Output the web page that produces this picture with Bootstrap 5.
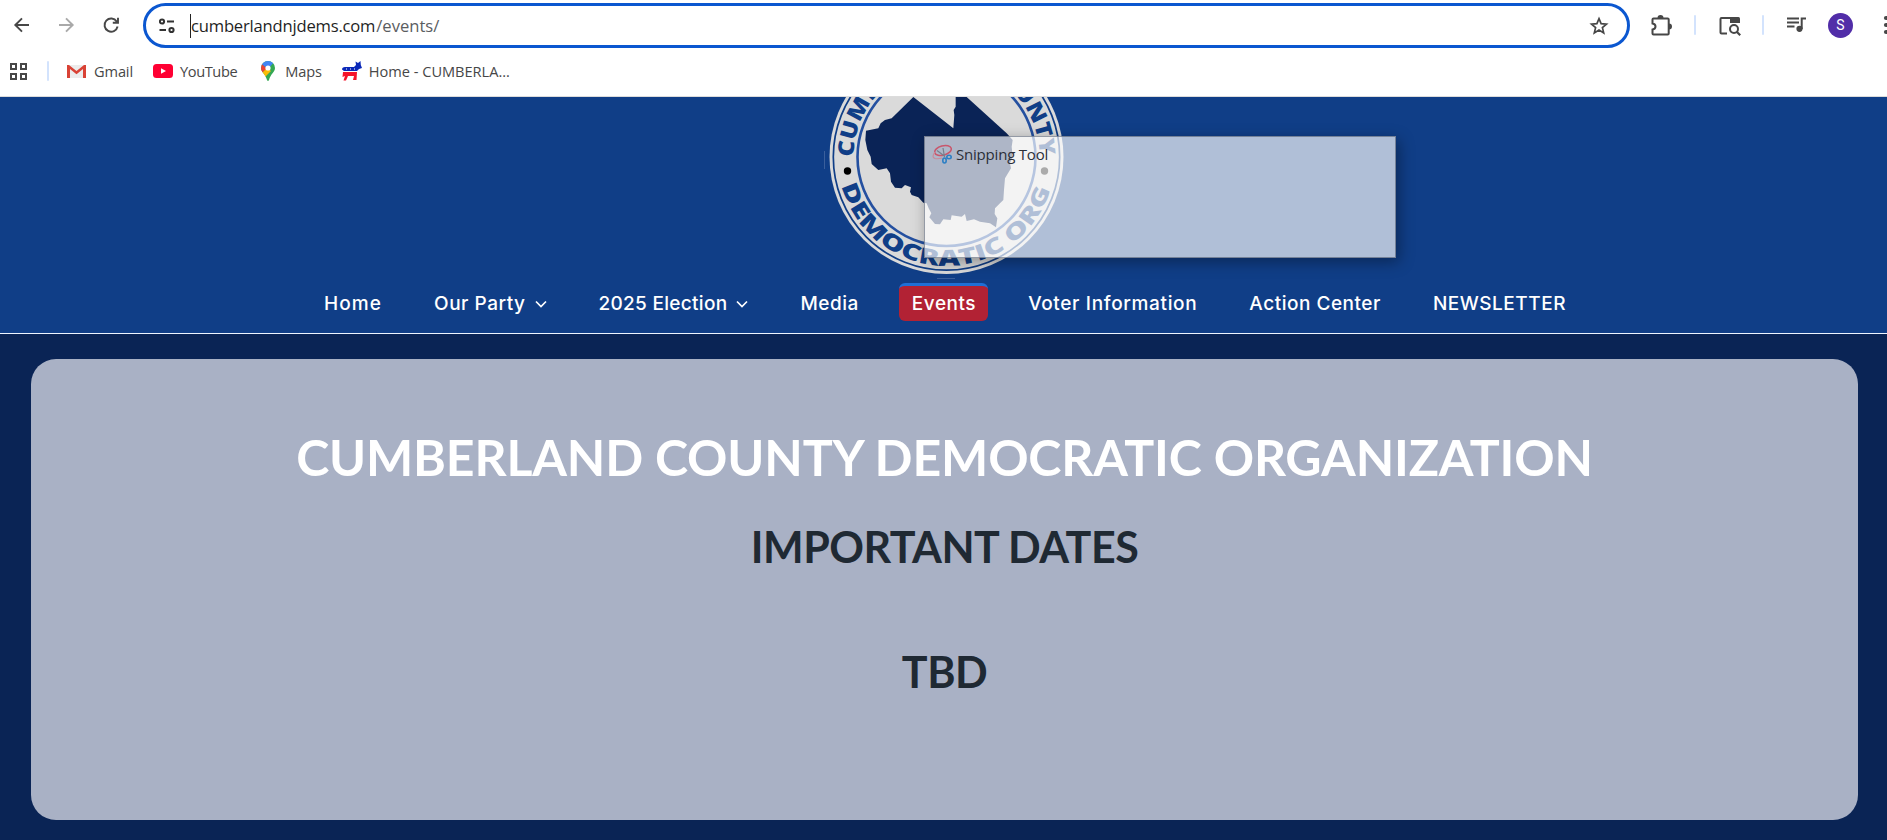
<!DOCTYPE html>
<html lang="en">
<head>
<meta charset="utf-8">
<title>Events - Cumberland County Democratic Organization</title>
<link rel="stylesheet" href="https://cdn.jsdelivr.net/npm/bootstrap@5.3.0/dist/css/bootstrap.min.css">
<style>
body{background:#fff;overflow:hidden;font-family:"Open Sans",sans-serif;height:840px}
svg{display:block;flex:none}
/* browser chrome */
.tool-row{height:50px;padding-left:12px;overflow:hidden}
.omni{flex:none;height:45px;width:1487px;margin:1px 0 0 22px;border:3px solid #0b57d0;border-radius:23px;padding:0 18px 0 9px}
.caret{width:1px;height:24px;background:#222}
.url{font-size:16.6px;letter-spacing:-.2px;color:#1f1f1f;line-height:24px}
.url span{color:#5a5d61;letter-spacing:0;margin-left:1px}
.sep{width:2px;height:20px;background:#d3e3fd;border-radius:1px;flex:none}
.avatar{width:25px;height:25px;background:#512da8;font:400 14px Roboto,sans-serif;flex:none}
.marks-row{height:46px;padding:0 0 4px 9px;font-size:14.6px;letter-spacing:-.12px;color:#474747;line-height:20px}
.marks-row a{color:inherit}
.marks-row span{padding-bottom:1px}
.marks-row .l-tube{letter-spacing:-.4px}
.marks-row .l-home{letter-spacing:-.02px}
.chrome-edge{height:1px;background:#dcdcdc}
.g18{margin-left:18px}.g19{margin-left:19px}.g20{margin-left:20px}.g21{margin-left:21px}.g22{margin-left:22px}.g24{margin-left:24px}.g25{margin-left:25px}.g30{margin-left:30px}
.g4{margin-left:4px}.g7{margin-left:7px}.g9{margin-left:9px}.g10{margin-left:10px}
/* site */
.site-head{height:237px;background:#103e87;border-bottom:1px solid #eef5ff}
.menu{padding-left:324px;gap:52px;font:500 19px/24px Inter,sans-serif}
.menu a{color:#fff;letter-spacing:.52px;padding-top:9px}
.menu .l-first{letter-spacing:1.1px}
.menu .l-elec{letter-spacing:.3px}
.menu .l-voter{letter-spacing:.66px}
.menu .on{background:#b22234;border-top:3px solid #1f6fd6;border-radius:6px;margin:0 -12px;padding:6px 12px 5px 13px}
.site-body{height:506px;background:#0a2455;padding:25px 29px 0 31px}
.panel{height:461px;background:#a9b1c5;border-radius:25px;padding-top:68px;font-family:Lato,sans-serif;font-weight:700;color:#1f2933}
.panel h1{font-size:50px;line-height:60px;font-weight:700;letter-spacing:-.17px;color:#fff;margin:0 0 34px}
.panel h2{font-size:43px;line-height:52px;font-weight:700;letter-spacing:-.5px;margin:0 0 73px}
.snip{left:924px;top:136px;width:472px;height:122px;background:rgba(255,255,255,.67);border:1px solid rgba(70,80,100,.55);box-shadow:3px 4px 14px rgba(0,0,0,.36);padding:6px 0 0 7px;font-size:15px;letter-spacing:-.2px;line-height:22px;color:#2b2f38}
</style>
</head>
<body>
<header>
  <div class="tool-row d-flex align-items-center">
    <svg width="20" height="20" viewBox="0 0 20 20" fill="none" stroke="#474747" stroke-width="1.9"><path d="M17 10H4M10 3.3 3.3 10 10 16.7"/></svg>
    <svg class="g24" width="20" height="20" viewBox="0 0 20 20" fill="none" stroke="#a9a9a9" stroke-width="1.9"><path d="M3 10h13M10 3.3 16.7 10 10 16.7"/></svg>
    <svg class="g25" width="20" height="20" viewBox="0 0 20 20" fill="none" stroke="#474747" stroke-width="1.9"><path d="M15.7 6.500A6.600 6.600 0 1 0 16.600 11.500M17 2.800v5h-5.200"/></svg>
    <div class="omni d-flex align-items-center">
      <svg class="ms-1" width="18" height="18" viewBox="0 0 18 18" fill="none" stroke="#333" stroke-width="2"><circle cx="3" cy="4.500" r="2.100"/><path d="M8 4.500h7M.5 13H7"/><circle cx="12.500" cy="13" r="2.100"/></svg>
      <div class="caret" style="margin-left:13px"></div>
      <div class="url">cumberlandnjdems.com<span>/events/</span></div>
      <svg class="ms-auto" width="20" height="20" viewBox="0 0 20 20" fill="none" stroke="#474747" stroke-width="1.7"><path d="m10 2.600 2.100 5 5.400.5-4.100 3.500 1.300 5.300L10 14.100l-4.700 2.800 1.300-5.300L2.500 8.100l5.400-.5z"/></svg>
    </div>
    <svg class="g19" width="24" height="24" viewBox="0 0 24 24"><path d="M4.500 5.500h14.200q1 0 1 1v14q0 1-1 1H4.500q-1 0-1-1v-4q3-.5 3-3t-3-3v-4q0-1 1-1z" fill="none" stroke="#474747" stroke-width="2"/><path d="M8.500 5a3 3 0 0 1 6 0zM20 10.500a3 3 0 0 1 0 6z" fill="#474747"/></svg>
    <div class="sep g21"></div>
    <svg class="g22" width="24" height="22" viewBox="0 0 24 22"><path d="M12 4H3.500q-1 0-1 1v13.500q0 1 1 1H9" fill="none" stroke="#474747" stroke-width="2"/><path d="M12 3h8.500Q22 3 22 4.500V9H12z" fill="#474747"/><circle cx="16" cy="15" r="4" fill="none" stroke="#474747" stroke-width="2"/><path d="m18.700 17.700 3.500 3.500" stroke="#474747" stroke-width="2.200"/></svg>
    <div class="sep g20"></div>
    <svg class="g22" width="22" height="20" viewBox="0 0 22 20"><path d="M1 3.500h12M1 7.500h12M1 11.500h7.500M15.700 14V3.500H20" fill="none" stroke="#474747" stroke-width="2"/><circle cx="13.500" cy="13.800" r="3.100" fill="#474747"/></svg>
    <div class="avatar g20 rounded-circle text-white d-flex align-items-center justify-content-center">S</div>
    <svg class="g30" width="8" height="20" viewBox="0 0 8 20" fill="#474747"><circle cx="3" cy="3" r="2.100"/><circle cx="3" cy="10" r="2.100"/><circle cx="3" cy="17" r="2.100"/></svg>
  </div>
  <nav class="marks-row d-flex align-items-center">
    <svg width="19" height="19" viewBox="0 0 19 19" fill="none" stroke="#474747" stroke-width="2"><path d="M2 2h5v5H2zM12 2h5v5h-5zM2 12h5v5H2zM12 12h5v5h-5z"/></svg>
    <div class="sep g19"></div>
    <a href="#" class="g18 d-flex align-items-center text-decoration-none">
      <svg width="19" height="14" viewBox="0 0 19 14"><path d="M1 1h17v13H1z" fill="#ececec"/><path d="M0 1h2l7.500 6L17 1h2v13h-3V5l-6.500 5.200L3 5v9H0z" fill="#d94235"/></svg>
      <span class="ms-2">Gmail</span></a>
    <a href="#" class="g20 d-flex align-items-center text-decoration-none">
      <svg width="20" height="14" viewBox="0 0 20 14"><rect width="20" height="14" rx="3.500" fill="#f03"/><path d="m8 4.300 5 2.700-5 2.700z" fill="#fff"/></svg>
      <span class="g7 l-tube">YouTube</span></a>
    <a href="#" class="g24 d-flex align-items-center text-decoration-none">
      <svg width="14" height="20" viewBox="0 0 14 20"><clipPath id="pin"><path d="M7 0a7 7 0 0 1 7 7c0 4-4.500 6-6 12q-1 2-2 0C4.500 13 0 11 0 7a7 7 0 0 1 7-7z"/></clipPath><g clip-path="url(#pin)"><path d="M0 0h14v20H0z" fill="#34a853"/><path d="M0 3 7 8 14 0H0z" fill="#4285f4"/><path d="M0 2.500 6 7.500 1 12-1 9z" fill="#ea4335"/><path d="m1 12 5-5 4 3-6 6z" fill="#fbbc04"/></g><circle cx="7" cy="7" r="2.600" fill="#fff"/></svg>
      <span class="g10">Maps</span></a>
    <a href="#" class="g20 d-flex align-items-center text-decoration-none">
      <svg width="20" height="20" viewBox="0 0 20 20"><path d="M0 8.500Q0 6 3 6h9l2-2-.5-3.500L16 2l2.500-2 .3 4L20 7l-3 1-2 2H2z" fill="#0a28b8"/><path d="M1 11h14l-.5 8H11l1-4H6l-2 4.500H1.500L3 15l-2.500 1z" fill="#f5142a"/><path d="M4 8h1M8 8h1M12 8h1" stroke="#fff"/></svg>
      <span class="g7 l-home">Home - CUMBERLA...</span></a>
  </nav>
  <div class="chrome-edge"></div>
</header>
<main>
  <div class="site-head">
    <div class="d-flex justify-content-center">
      <svg width="271" height="185" viewBox="808 97 271 185">
        <defs>
          <path id="arcTop" d="M853.500 157a93 93 0 0 1 186 0"/>
          <path id="arcLow" d="M841.500 186a109 109 0 0 0 210 0"/>
        </defs>
        <circle cx="946.500" cy="157" r="117" fill="#dadada"/>
        <circle cx="946.500" cy="157" r="113.200" fill="none" stroke="#103e87" stroke-width="1.700"/>
        <circle cx="946.500" cy="157" r="89" fill="none" stroke="#2450a0" stroke-width="2.600"/>
        <path transform="translate(810 90) scale(.33333)" fill="#0a2356" d="M168 122 205 115 212 100 225 90 245 85 310 21 430 115 433 75 431 60 437 50V21H470L590 130 608 150 605 170 608 200 600 220 603 235 585 265 582 300 580 330 570 340 555 355 554 372 562 385 558 412 540 400 510 395 492 388 470 393 465 372 455 380 425 376 422 390 400 388 390 403 375 402 358 382 364 370 356 355 350 340 340 338 325 322 305 315 300 305 303 292 285 285 275 295 255 293 243 275 240 250 230 235 205 240 185 222 182 200 172 180 166 150Z"/>
        <g font-family="Open Sans, sans-serif" font-weight="800" font-size="22" fill="#103e87">
          <text textLength="290" lengthAdjust="spacingAndGlyphs"><textPath href="#arcTop">CUMBERLAND COUNTY</textPath></text>
          <text textLength="279" lengthAdjust="spacingAndGlyphs"><textPath href="#arcLow">DEMOCRATIC ORG</textPath></text>
        </g>
        <circle cx="847.500" cy="171" r="3.700"/><circle cx="1044.500" cy="171" r="3.700"/>
        <path d="M824.500 151v18M937 278.500h18" stroke="#3a5f9c"/>
      </svg>
    </div>
    <nav class="menu d-flex mt-0 pt-0 align-items-start" style="margin-top:1px!important">
      <a href="#" class="l-first text-decoration-none">Home</a>
      <a href="#" class="d-flex text-decoration-none">Our Party<svg class="g9" width="12" height="24" viewBox="0 0 12 24" fill="none" stroke="#fff" stroke-width="1.7"><path d="m1 9.500 5 5 5-5"/></svg></a>
      <a href="#" class="l-elec d-flex text-decoration-none">2025 Election<svg class="g9" width="12" height="24" viewBox="0 0 12 24" fill="none" stroke="#fff" stroke-width="1.7"><path d="m1 9.500 5 5 5-5"/></svg></a>
      <a href="#" class="text-decoration-none">Media</a>
      <a href="#" class="on text-decoration-none">Events</a>
      <a href="#" class="l-voter text-decoration-none">Voter Information</a>
      <a href="#" class="text-decoration-none">Action Center</a>
      <a href="#" class="text-decoration-none">NEWSLETTER</a>
    </nav>
  </div>
  <div class="site-body">
    <section class="panel text-center">
      <h1>CUMBERLAND COUNTY DEMOCRATIC ORGANIZATION</h1>
      <h2>IMPORTANT DATES</h2>
      <h2>TBD</h2>
    </section>
  </div>
</main>
<div class="snip position-absolute d-flex align-items-start">
  <svg width="20" height="20" viewBox="0 0 20 20" fill="none" style="margin-top:1px"><ellipse cx="11" cy="6.500" rx="8.500" ry="4.700" transform="rotate(-15 11 6.500)" stroke="#c9566c" stroke-width="1.500"/><path d="M3 8q-4 5 0 6.500 3 .7 7-.5" stroke="#c98a9a" stroke-width="1.200"/><path d="m5 6.500 8 6M11 4l1.500 9" stroke="#777f8c" stroke-width="1.200"/><ellipse cx="12.500" cy="16.500" rx="1.700" ry="2.500" stroke="#2d7fc4" stroke-width="1.600"/><ellipse cx="17" cy="13" rx="2.200" ry="1.700" stroke="#2d7fc4" stroke-width="1.600"/></svg>
  <span class="g4">Snipping Tool</span>
</div>
<script src="https://cdn.jsdelivr.net/npm/bootstrap@5.3.0/dist/js/bootstrap.bundle.min.js"></script>
</body></html>
